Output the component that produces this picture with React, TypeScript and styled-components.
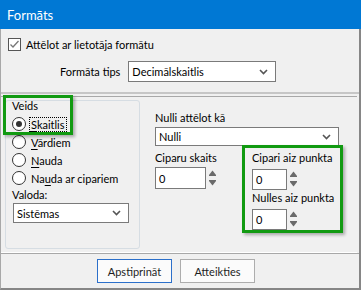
import React from "react";
import styled, { createGlobalStyle } from "styled-components";

const Global = createGlobalStyle`
  html, body { margin: 0; padding: 0; background: #f0f0f0; }
  body { font-family: Lato, "Noto Sans", sans-serif; font-size: 11px; color: #000; }
  * { box-sizing: border-box; }
`;

const Window = styled.div`
  position: relative;
  width: 361px;
  height: 290px;
  display: flex;
  flex-direction: column;
  overflow: hidden;
`;

const TitleBar = styled.div`
  height: 29px;
  flex: none;
  background: #0078d4;
  color: #fff;
  font-size: 13px;
  display: flex;
  align-items: center;
  padding-left: 7px;
`;

const Body = styled.div`
  flex: 1;
  display: flex;
  flex-direction: column;
  border-left: 1px solid #a8a8a8;
  border-right: 2px solid #868686;
  border-bottom: 2px solid #868686;
  background: #f0f0f0;
`;

const TopPanel = styled.div`
  height: 65px;
  flex: none;
  border-bottom: 2px solid #c6c6c6;
  padding: 8px 0 0 7px;
  display: flex;
  flex-direction: column;
`;

const CheckRow = styled.div`
  display: flex;
  align-items: center;
  gap: 5px;
  height: 14px;
`;

const CheckBox = styled.div`
  width: 13px;
  height: 13px;
  border: 1px solid #555;
  background: #fff;
  display: flex;
  align-items: center;
  justify-content: center;
`;

const FormRow = styled.div`
  display: flex;
  align-items: center;
  margin-top: 10px;
  padding-left: 52px;
  gap: 8px;
`;

const Label = styled.div<{ $top?: number }>`
  height: 14px;
  line-height: 14px;
  white-space: nowrap;
  margin-top: ${(p) => p.$top ?? 0}px;
`;

const SelectBox = styled.div<{ $w: number; $h: number; $top?: number; $left?: number }>`
  width: ${(p) => p.$w}px;
  height: ${(p) => p.$h}px;
  margin-top: ${(p) => p.$top ?? 0}px;
  margin-left: ${(p) => p.$left ?? 0}px;
  background: #fff;
  border: 1px solid #7a7a7a;
  display: flex;
  align-items: center;
  justify-content: space-between;
  padding: 0 7px 0 3px;
  flex: none;
`;

const MainPanel = styled.div`
  position: relative;
  margin-top: 2px;
  margin-right: 2px;
  height: 157px;
  flex: none;
  border-top: 1px solid #a8a8a8;
  border-bottom: 1px solid #ffffff;
  display: flex;
  padding: 3px 0 0 4px;
  gap: 15px;
`;

const GroupBox = styled.div`
  width: 135px;
  height: 149px;
  border: 1px solid #d6dde3;
  border-radius: 3px;
  padding: 0 0 0 6px;
  display: flex;
  flex-direction: column;
`;

const RadioList = styled.div`
  margin-top: 2px;
  display: flex;
  flex-direction: column;
`;

const RadioRow = styled.div`
  height: 18px;
  display: flex;
  align-items: center;
  gap: 3px;
`;

const RadioCircle = styled.div<{ $on?: boolean }>`
  width: 14px;
  height: 14px;
  border-radius: 50%;
  border: 1px solid #333;
  background: #fff;
  display: flex;
  align-items: center;
  justify-content: center;
  &::after {
    content: "";
    width: 6px;
    height: 6px;
    border-radius: 50%;
    background: ${(p) => (p.$on ? "#333" : "transparent")};
  }
`;

const RadioText = styled.span<{ $focus?: boolean }>`
  padding: 0 1px;
  line-height: 13px;
  border: 1px dotted ${(p) => (p.$focus ? "#000" : "transparent")};
  u { text-decoration-thickness: 1px; text-underline-offset: 2px; }
`;

const RightCol = styled.div`
  display: flex;
  flex-direction: column;
  padding-top: 11px;
`;

const SubRow = styled.div`
  display: flex;
  margin-top: 5px;
`;

const SubCol = styled.div<{ $w?: number; $pl?: number }>`
  width: ${(p) => (p.$w ? `${p.$w}px` : "auto")};
  padding-left: ${(p) => p.$pl ?? 0}px;
  display: flex;
  flex-direction: column;
`;

const SpinWrap = styled.div<{ $top?: number }>`
  display: flex;
  align-items: center;
  gap: 2px;
  margin-top: ${(p) => p.$top ?? 0}px;
`;

const SpinInput = styled.div<{ $w: number; $h: number }>`
  width: ${(p) => p.$w}px;
  height: ${(p) => p.$h}px;
  background: #fff;
  border: 1px solid #7a7a7a;
  display: flex;
  align-items: center;
  padding-left: 3px;
`;

const Footer = styled.div`
  flex: 1;
  border-top: 1px solid #a8a8a8;
  display: flex;
  justify-content: center;
  align-items: flex-start;
  padding: 5px 8px 0 0;
  gap: 8px;
`;

const Button = styled.div<{ $default?: boolean }>`
  width: 75px;
  height: 24px;
  border: 1px solid ${(p) => (p.$default ? "#2b6fca" : "#adadad")};
  background: #fbfbfb;
  display: flex;
  align-items: center;
  justify-content: center;
  color: #1e1e1e;
`;

const Highlight = styled.div`
  position: absolute;
  border: 3px solid #119a11;
  box-shadow: 2px 2px 3px rgba(0, 0, 0, 0.3);
  pointer-events: none;
`;

const Chevron = () => (
  <svg width="9" height="6" viewBox="0 0 9 6">
    <path d="M1 1 L4.5 4.5 L8 1" fill="none" stroke="#555" strokeWidth="1.6" />
  </svg>
);

const Arrows = () => (
  <svg width="9" height="22" viewBox="0 0 9 22">
    <path d="M1 8 L4.5 3.5 L8 8 Z" fill="#6a6a6a" />
    <rect x="1" y="8" width="7" height="1" fill="#6a6a6a" />
    <rect x="1" y="13" width="7" height="1" fill="#6a6a6a" />
    <path d="M1 14 L4.5 18.5 L8 14 Z" fill="#6a6a6a" />
  </svg>
);

const Select = ({ w, h, text, top, left }: { w: number; h: number; text: string; top?: number; left?: number }) => (
  <SelectBox $w={w} $h={h} $top={top} $left={left}>
    <span>{text}</span>
    <Chevron />
  </SelectBox>
);

const Spinner = ({ w, h, top }: { w: number; h: number; top?: number }) => (
  <SpinWrap $top={top}>
    <SpinInput $w={w} $h={h}>0</SpinInput>
    <Arrows />
  </SpinWrap>
);

export default function App() {
  return (
    <>
      <Global />
      <Window>
        <TitleBar>Formāts</TitleBar>
        <Body>
          <TopPanel>
            <CheckRow>
              <CheckBox>
                <svg width="11" height="11" viewBox="0 0 11 11">
                  <path d="M1.5 5.5 L4 8 L9.5 2" fill="none" stroke="#777" strokeWidth="1.3" />
                </svg>
              </CheckBox>
              <span>Attēlot ar lietotāja formātu</span>
            </CheckRow>
            <FormRow>
              <span>Formāta tips</span>
              <Select w={148} h={21} text="Decimālskaitlis" />
            </FormRow>
          </TopPanel>
          <MainPanel>
            <GroupBox>
              <Label $top={-2}>Veids</Label>
              <RadioList>
                <RadioRow>
                  <RadioCircle $on />
                  <RadioText $focus><u>S</u>kaitlis</RadioText>
                </RadioRow>
                <RadioRow>
                  <RadioCircle />
                  <RadioText><u>V</u>ārdiem</RadioText>
                </RadioRow>
                <RadioRow>
                  <RadioCircle />
                  <RadioText><u>N</u>auda</RadioText>
                </RadioRow>
                <RadioRow>
                  <RadioCircle />
                  <RadioText>Na<u>u</u>da ar cipariem</RadioText>
                </RadioRow>
              </RadioList>
              <Label $top={1}>Valoda:</Label>
              <Select w={116} h={20} top={1} left={1} text="Sistēmas" />
            </GroupBox>
            <RightCol>
              <Label>Nulli attēlot kā</Label>
              <Select w={184} h={19} top={2} text="Nulli" />
              <SubRow>
                <SubCol $w={87}>
                  <Label>Ciparu skaits</Label>
                  <Spinner w={51} h={22} top={2} />
                </SubCol>
                <SubCol $pl={10}>
                  <Label>Cipari aiz punkta</Label>
                  <Spinner w={35} h={21} top={3} />
                  <Label $top={1}>Nulles aiz punkta</Label>
                  <Spinner w={35} h={21} top={3} />
                </SubCol>
              </SubRow>
            </RightCol>
          </MainPanel>
          <Footer>
            <Button $default>Apstiprināt</Button>
            <Button>Atteikties</Button>
          </Footer>
        </Body>
        <Highlight style={{ left: 3, top: 95, width: 70, height: 40 }} />
        <Highlight style={{ left: 242, top: 145, width: 101, height: 88 }} />
      </Window>
    </>
  );
}
